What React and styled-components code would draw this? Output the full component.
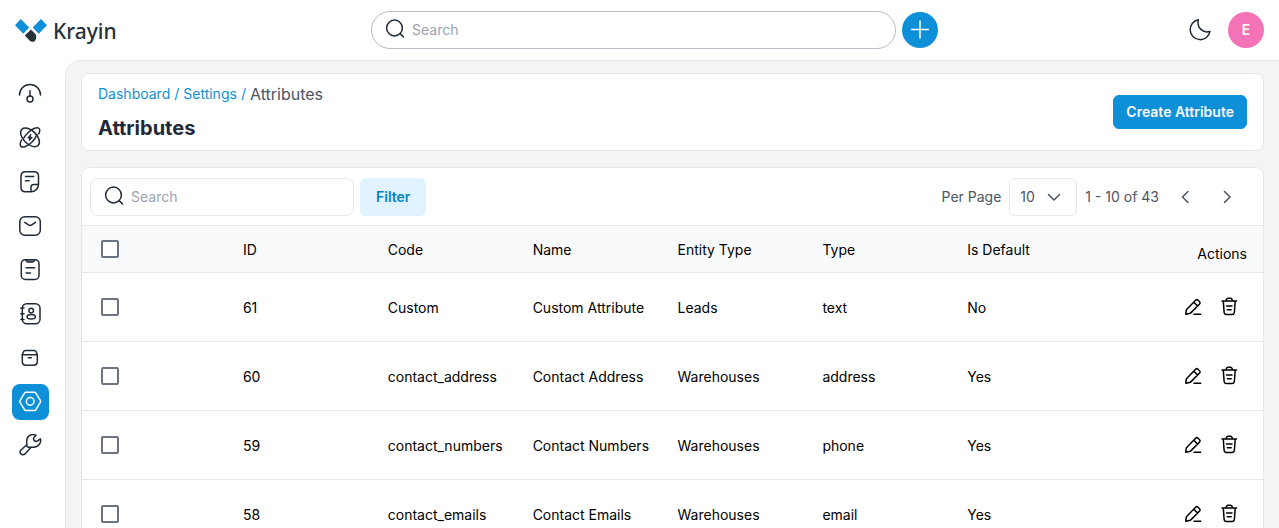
import React from "react";
import styled, { createGlobalStyle } from "styled-components";

const GlobalStyle = createGlobalStyle`
  *, *::before, *::after { box-sizing: border-box; }
  body {
    margin: 0;
    background: #fff;
    color: #000;
    font-family: Inter, "Liberation Sans", sans-serif;
    font-size: 14px;
    line-height: 20px;
  }
  button, input, select { font: inherit; margin: 0; }
`;

const Shell = styled.div`
  display: flex;
  flex-direction: column;
  height: 100vh;
`;

const TopBar = styled.header`
  display: flex;
  align-items: center;
  justify-content: space-between;
  flex: none;
  height: 60px;
  padding: 0 15px;
`;

const Brand = styled.a`
  display: flex;
  align-items: center;
  gap: 6px;
  width: 112px;
  padding-top: 2px;
  color: #263238;
  text-decoration: none;
  font: 500 21px/28px "Noto Sans", "Open Sans", sans-serif;
`;

const SearchGroup = styled.div`
  display: flex;
  align-items: center;
  gap: 6px;
  flex: 0 1 567px;
`;

const SearchBox = styled.label`
  display: flex;
  align-items: center;
  gap: 5px;
  flex: ${(p) => (p.$pill ? "1 1 auto" : "0 1 264px")};
  min-width: 0;
  height: 38px;
  padding: 0 11px;
  border: 1px solid ${(p) => (p.$pill ? "#b9bcc8" : "#e5e7eb")};
  border-radius: ${(p) => (p.$pill ? "19px" : "8px")};
  color: #1f2937;
`;

const SearchInput = styled.input`
  flex: 1;
  min-width: 0;
  padding: 0;
  border: 0;
  outline: 0;
  background: transparent;
  color: #4b5563;
  &::placeholder { color: #9ca3af; opacity: 1; }
`;

const RoundButton = styled.button`
  display: grid;
  place-items: center;
  flex: none;
  width: 36px;
  height: 36px;
  padding: 0;
  border: 0;
  border-radius: 50%;
  background: ${(p) => p.$bg};
  color: #fff;
  font-weight: 600;
  cursor: pointer;
`;

const IconButton = styled.button`
  display: grid;
  place-items: center;
  width: 36px;
  height: 36px;
  padding: 0;
  border: 0;
  border-radius: 6px;
  background: transparent;
  color: ${(p) => p.$color};
  cursor: pointer;
`;

const TopActions = styled.div`
  display: flex;
  align-items: center;
  gap: 10px;
`;

const Body = styled.div`
  display: flex;
  flex: 1;
  min-height: 0;
`;

const Sidebar = styled.nav`
  display: flex;
  flex-direction: column;
  gap: 8px;
  flex: none;
  width: 65px;
  padding: 16px 16px 0 12px;
`;

const NavLink = styled.a`
  display: flex;
  align-items: center;
  height: 36px;
  padding: 0 6px;
  border-radius: 8px;
  background: ${(p) => (p.$active ? "#0e90d9" : "transparent")};
  color: ${(p) => (p.$active ? "#fff" : "#1f2937")};
`;

const Main = styled.main`
  display: flex;
  flex-direction: column;
  gap: 16px;
  flex: 1;
  min-width: 0;
  padding: 12px 15px 16px;
  border: solid #e5e7eb;
  border-width: 1px 0 0 1px;
  border-top-left-radius: 16px;
  background: #f3f4f6;
  overflow-y: auto;
  scrollbar-width: none;
`;

const Card = styled.section`
  flex: none;
  border: 1px solid #e5e7eb;
  border-radius: 8px;
  background: #fff;
  overflow: hidden;
`;

const PageHead = styled(Card)`
  display: flex;
  align-items: center;
  justify-content: space-between;
  padding: 8px 16px;
`;

const HeadText = styled.div`
  display: flex;
  flex-direction: column;
  gap: 8px;
`;

const Crumbs = styled.nav`
  display: flex;
  align-items: center;
  gap: 4px;
  color: #0e90d9;
`;

const CrumbLink = styled.a`
  color: inherit;
  text-decoration: none;
`;

const CrumbCurrent = styled.span`
  color: #4b5563;
  font-size: 16px;
  line-height: 24px;
`;

const Title = styled.h1`
  margin: 0;
  color: #1f2937;
  font-size: 20px;
  font-weight: 700;
  line-height: 28px;
`;

const PrimaryButton = styled.button`
  height: 34px;
  padding: 0 12px;
  border: 1px solid #0e90d9;
  border-radius: 6px;
  background: #0e90d9;
  color: #f9fafb;
  font-weight: 600;
  cursor: pointer;
`;

const FilterButton = styled.button`
  height: 38px;
  padding: 0 16px;
  border: 0;
  border-radius: 6px;
  background: #e0f2fe;
  color: #0284c7;
  font-weight: 600;
  cursor: pointer;
`;

const Toolbar = styled.div`
  display: flex;
  align-items: center;
  justify-content: space-between;
  gap: 16px;
  padding: 10px 18px 9px 8px;
  border-bottom: 1px solid #e5e7eb;
`;

const ToolbarSearch = styled.div`
  display: flex;
  align-items: center;
  gap: 6px;
  flex: 1;
  min-width: 0;
`;

const Pager = styled.div`
  display: flex;
  align-items: center;
  gap: 8px;
  color: #4b5563;
  white-space: nowrap;
`;

const PagerButtons = styled.div`
  display: flex;
  gap: 6px;
`;

const PerPage = styled.label`
  display: flex;
  align-items: center;
  gap: 8px;
`;

const SelectWrap = styled.span`
  display: grid;
  align-items: center;
  & > * { grid-area: 1 / 1; }
  & > svg { justify-self: end; margin-right: 11px; pointer-events: none; }
`;

const Select = styled.select`
  appearance: none;
  width: 68px;
  height: 38px;
  padding: 0 10px;
  border: 1px solid #e5e7eb;
  border-radius: 6px;
  background: #fff;
  color: #4b5563;
`;

const Table = styled.table`
  display: block;
  width: 100%;
  & > thead, & > tbody { display: block; }
`;

const Row = styled.tr`
  display: grid;
  grid-template-columns: repeat(8, minmax(0, 1fr));
  gap: 10px;
  align-items: center;
  padding: ${(p) => (p.$head ? "10px 16px" : "16px")};
  border-bottom: 1px solid #e5e7eb;
  background: ${(p) => (p.$head ? "#f9fafb" : "#fff")};
`;

const HeadCell = styled.th`
  padding: 2px 0 0;
  font-weight: 400;
  text-align: left;
`;

const ActionsHead = styled(HeadCell)`
  padding-top: 10px;
  line-height: 16px;
  text-align: right;
`;

const Cell = styled.td`
  padding: 2px 0 0;
`;

const TickCell = styled.td`
  padding: 0;
`;

const ActionsCell = styled.td`
  display: flex;
  justify-content: flex-end;
  padding: 0;
`;

const Tick = styled.input`
  appearance: none;
  display: block;
  width: 18px;
  height: 18px;
  margin: 0 3px;
  border: 2px solid #6b7280;
  border-radius: 2px;
  background: #fff;
  &:checked { background: #0e90d9; border-color: #0e90d9; }
`;

const Svg = styled.svg`
  display: block;
  flex: none;
  fill: none;
  stroke: currentColor;
  stroke-width: 1.5;
  stroke-linecap: round;
  stroke-linejoin: round;
`;

const Icon = ({ children, size = 24 }) => (
  <Svg width={size} height={size} viewBox="0 0 24 24" aria-hidden="true">
    {children}
  </Svg>
);

const SearchIcon = () => (
  <Icon>
    <circle cx="11.500" cy="10" r="7.900" />
    <path d="M17.100 15.600l3.400 3.400" />
  </Icon>
);

const nav = [
  {
    label: "Dashboard",
    icon: (
      <>
        <path d="M1.500 13a10.500 10.500 0 0 1 21 0" />
        <path d="M12 8.800v5.200" />
        <circle cx="12" cy="17" r="3" />
      </>
    ),
  },
  {
    label: "Leads",
    icon: (
      <>
        <ellipse cx="12" cy="11.300" rx="11.500" ry="6.600" transform="rotate(45 12 11.300)" />
        <path d="M19 8.500C18 11.500 16 14 14 16 9.500 20.500 4.700 22 3 20.400c-1.300-1.300-.9-3.700.5-6.400M5.800 12C7 10 8.300 8.300 10 6.700 14.500 2.200 19.300.700 20.900 2.300c1.200 1.100 1 3.300-.1 5.500" />
        <path d="M12.700 8.500L9.700 12h2l-.4 2.800L14.300 11.300h-2z" fill="currentColor" strokeWidth="1" />
      </>
    ),
  },
  {
    label: "Quotes",
    icon: (
      <>
        <path d="M13 21.700H7.500q-4.500 0-4.500-4.500V6.300q0-4.500 4.500-4.500h8.500q4.500 0 4.500 4.500v8.200c0 4-3.500 7.200-7.500 7.200z" />
        <path d="M13 21.500v-4.200q0-2.800 2.800-2.800h4.500" />
        <path d="M7.500 6.500h8.200M7.500 10.800h3.600" />
      </>
    ),
  },
  {
    label: "Mail",
    icon: (
      <>
        <rect x="1.800" y="2.800" width="20.500" height="18.500" rx="5" />
        <path d="M6.800 8.300l3.300 2.400q2 1.400 4 0l3.300-2.400" />
      </>
    ),
  },
  {
    label: "Activities",
    icon: (
      <>
        <rect x="3.300" y="1.700" width="17.700" height="19.800" rx="4" />
        <path d="M8.300 1.800v.8q0 1.400 1.400 1.400h5q1.400 0 1.400-1.400v-.8z" fill="#9ca3af" />
        <path d="M8.100 9.700h8.500M8.100 15h4.400" />
      </>
    ),
  },
  {
    label: "Contacts",
    icon: (
      <>
        <rect x="4.300" y="1.700" width="17.700" height="20" rx="4.500" />
        <path d="M2.800 6h3.200M2.800 11.700h3.200M2.800 17.500h3.200" />
        <circle cx="13.200" cy="8.600" r="2.300" />
        <ellipse cx="13.200" cy="14.800" rx="4.200" ry="2.300" />
      </>
    ),
  },
  {
    label: "Products",
    icon: (
      <>
        <path d="M4.300 8.800v6.700q0 3.800 3.800 3.800h7.400q3.800 0 3.800-3.800V8.800z" />
        <path d="M4.300 8.800l.8-2.400Q5.800 4.500 7.800 4.500h8q2 0 2.700 1.900l.8 2.400M10.300 11.800h3" />
      </>
    ),
  },
  {
    label: "Settings",
    active: true,
    icon: (
      <>
        <path d="M8 2.300h8.400q1 0 1.500.9l4.400 7.100q.6 1 0 2l-4.400 7.300q-.5.900-1.500.9H8q-1 0-1.500-.9L2.100 12.300q-.6-1 0-2l4.400-7.100q.5-.9 1.500-.9z" />
        <circle cx="12.200" cy="11.400" r="3.800" />
      </>
    ),
  },
  {
    label: "Configuration",
    icon: (
      <>
        <path d="M18 1.300C13.700-.600 8.700 1.700 8.700 7v4.200q0 2 2 2h4.600c5 0 8.400-4.600 7-8.400l-2.600 2q-1.800 1.200-3.300-.2t-.4-3.200z" />
        <path d="M8.700 10.800L3 16a2.700 2.700 0 0 0 3.900 3.900l6-6.500" />
      </>
    ),
  },
];

const columns = ["ID", "Code", "Name", "Entity Type", "Type", "Is Default"];

const rows = [
  ["61", "Custom", "Custom Attribute", "Leads", "text", "No"],
  ["60", "contact_address", "Contact Address", "Warehouses", "address", "Yes"],
  ["59", "contact_numbers", "Contact Numbers", "Warehouses", "phone", "Yes"],
  ["58", "contact_emails", "Contact Emails", "Warehouses", "email", "Yes"],
];

function Header() {
  return (
    <TopBar>
      <Brand href="#">
        <svg width="32" height="24" viewBox="0 0 32 24" aria-hidden="true">
          <path d="M5.700 0l8.500 8.500-6 6.200L0 6.300zM26 0l6 6.300-8.200 8.400-6.100-6.200z" fill="#0e90d9" />
          <path d="M16 10.500l4.800 4.900c1.200 3.800-.3 7.300-3 7.300-1.400.1-2.400-.3-3.300-1.200l-4.700-5z" fill="#263238" />
        </svg>
        Krayin
      </Brand>
      <SearchGroup>
        <SearchBox $pill>
          <SearchIcon />
          <SearchInput type="text" placeholder="Search" aria-label="Search everything" />
        </SearchBox>
        <RoundButton $bg="#0e90d9" aria-label="Quick create">
          <Icon>
            <path d="M3.500 11.500h17M12 3v17" />
          </Icon>
        </RoundButton>
      </SearchGroup>
      <TopActions>
        <IconButton $color="#1f2937" aria-label="Dark mode">
          <Icon>
            <path d="M10.300 1.800A10 10 0 1 0 22 13.400C15.300 15.500 8.500 9.800 10.300 1.800z" />
          </Icon>
        </IconButton>
        <RoundButton $bg="#f472b6">E</RoundButton>
      </TopActions>
    </TopBar>
  );
}

function AttributeRow({ values }) {
  return (
    <Row>
      <TickCell>
        <Tick type="checkbox" aria-label={`Select ${values[2]}`} />
      </TickCell>
      {values.map((value, i) => (
        <Cell key={columns[i]}>{value}</Cell>
      ))}
      <ActionsCell>
        <IconButton $color="#000" aria-label="Edit">
          <Icon>
            <path d="M4.800 19.200l.4-3.500q.1-.8.700-1.400L14.600 5.200q1.200-1.100 2.400 0l1.600 1.500q1.100 1.200 0 2.300L9.800 17.900q-.5.500-1.300.6zM12.800 7.200l4 3.900M13 19.200h6.700" />
          </Icon>
        </IconButton>
        <IconButton $color="#000" aria-label="Delete">
          <Icon>
            <path d="M5 6h14.500M6.300 6l.8 11.200q.2 2.300 2.500 2.300h5.300q2.300 0 2.500-2.300L18.200 6M9 5.800l.4-1.300q.4-1.200 1.600-1.200h2.500q1.200 0 1.600 1.200l.4 1.300M9.500 11h5.500M10.300 14.700h3.900" />
          </Icon>
        </IconButton>
      </ActionsCell>
    </Row>
  );
}

export default function App() {
  return (
    <Shell>
      <GlobalStyle />
      <Header />
      <Body>
        <Sidebar aria-label="Main">
          {nav.map((item) => (
            <NavLink key={item.label} href="#" $active={item.active} aria-label={item.label}>
              <Icon>{item.icon}</Icon>
            </NavLink>
          ))}
        </Sidebar>
        <Main>
          <PageHead>
            <HeadText>
              <Crumbs aria-label="Breadcrumb">
                <CrumbLink href="#">Dashboard</CrumbLink>
                <span>/</span>
                <CrumbLink href="#">Settings</CrumbLink>
                <span>/</span>
                <CrumbCurrent>Attributes</CrumbCurrent>
              </Crumbs>
              <Title>Attributes</Title>
            </HeadText>
            <PrimaryButton>Create Attribute</PrimaryButton>
          </PageHead>
          <Card>
            <Toolbar>
              <ToolbarSearch>
                <SearchBox>
                  <SearchIcon />
                  <SearchInput type="text" placeholder="Search" aria-label="Search attributes" />
                </SearchBox>
                <FilterButton>Filter</FilterButton>
              </ToolbarSearch>
              <Pager>
                <PerPage>
                  Per Page
                  <SelectWrap>
                    <Select defaultValue="10">
                      <option>10</option>
                    </Select>
                    <Icon>
                      <path d="M6.500 9.500l5.500 5.500 5.500-5.500" />
                    </Icon>
                  </SelectWrap>
                </PerPage>
                <span>1 - 10 of 43</span>
                <PagerButtons>
                  <IconButton $color="#4b5563" aria-label="Previous page">
                    <Icon>
                      <path d="M15 6.500l-5.500 5.500 5.500 5.500" />
                    </Icon>
                  </IconButton>
                  <IconButton $color="#4b5563" aria-label="Next page">
                    <Icon>
                      <path d="M9.500 6.500l5.500 5.500-5.500 5.500" />
                    </Icon>
                  </IconButton>
                </PagerButtons>
              </Pager>
            </Toolbar>
            <Table>
              <thead>
                <Row $head>
                  <TickCell>
                    <Tick type="checkbox" aria-label="Select all" />
                  </TickCell>
                  {columns.map((name) => (
                    <HeadCell key={name}>{name}</HeadCell>
                  ))}
                  <ActionsHead>Actions</ActionsHead>
                </Row>
              </thead>
              <tbody>
                {rows.map((values) => (
                  <AttributeRow key={values[0]} values={values} />
                ))}
              </tbody>
            </Table>
          </Card>
        </Main>
      </Body>
    </Shell>
  );
}
